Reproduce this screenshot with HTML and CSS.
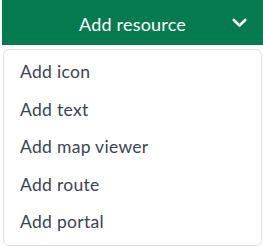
FILE: index.html
```html
<!DOCTYPE html>
<html lang="en">
<head>
<meta charset="UTF-8" />
<title>Add resource</title>
<meta name="viewport" content="width=device-width, initial-scale=1.0" />
<link rel="stylesheet" href="styles.css">
</head>
<body>
<div class="dropdown">
    <button class="toggle" type="button">
        <span class="label">Add resource</span>
        <svg class="chevron" width="15" height="10" viewBox="0 0 15 10">
            <polyline points="1.8,2 7.5,7.6 13.2,2" fill="none" stroke="#fff" stroke-width="2.6" stroke-linecap="round" stroke-linejoin="round" />
        </svg>
    </button>
    <ul class="menu">
        <li class="item">Add icon</li>
        <li class="item">Add text</li>
        <li class="item">Add map viewer</li>
        <li class="item">Add route</li>
        <li class="item">Add portal</li>
    </ul>
</div>
</body>
</html>
```

FILE: styles.css
```css
body {
    margin: 0;
    background: #fff;
    font-family: 'Lato', 'Noto Sans', sans-serif;
}
.dropdown {
    display: flex;
    flex-direction: column;
}
.toggle {
    display: grid;
    grid-template-columns: 1fr auto 1fr;
    align-items: center;
    height: 45px;
    margin: 0 0 0 2px;
    padding: 3px 16px 0;
    border: none;
    background: #067b4f;
    color: #fff;
    font-family: inherit;
    font-size: 18px;
    letter-spacing: 0.2px;
}
.label {
    grid-column: 2;
}
.chevron {
    grid-column: 3;
    justify-self: end;
    margin-top: -3px;
}
.menu {
    list-style: none;
    margin: 4px 1px 0 3px;
    padding: 3px 0 4px;
    border: 1px solid #dde3ea;
    border-radius: 6px;
    height: 197px;
    box-sizing: border-box;
}
.item {
    padding: 0 16px;
    line-height: 37.5px;
    font-size: 17.5px;
    letter-spacing: 0.3px;
    color: #3a4452;
}
```
